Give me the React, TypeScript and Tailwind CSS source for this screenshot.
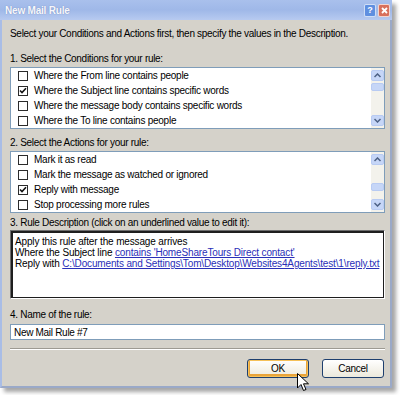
import React from "react";

const font = { fontFamily: '"Liberation Sans", Arial, sans-serif' };

const conditions = [
  { label: "Where the From line contains people", checked: false },
  { label: "Where the Subject line contains specific words", checked: true },
  { label: "Where the message body contains specific words", checked: false },
  { label: "Where the To line contains people", checked: false },
];

const actions = [
  { label: "Mark it as read", checked: false },
  { label: "Mark the message as watched or ignored", checked: false },
  { label: "Reply with message", checked: true },
  { label: "Stop processing more rules", checked: false },
];

function CheckBox({ checked }: { checked: boolean }) {
  return (
    <div className="flex h-[10px] w-[10px] flex-shrink-0 items-center justify-center border border-[#2b2b2b] bg-white">
      {checked && (
        <svg width="8" height="8" viewBox="0 0 8 8">
          <path d="M1 3.5 L3 5.5 L7 1.2" fill="none" stroke="#111" strokeWidth="1.6" />
        </svg>
      )}
    </div>
  );
}

function ScrollBar({ thumbTop }: { thumbTop: number }) {
  return (
    <div className="relative flex w-[13px] flex-shrink-0 flex-col justify-between bg-[#f3f2ec] py-[2px]">
      <div className="flex h-[11px] items-center justify-center rounded-[2px] border border-[#b8cbf3] bg-[#c6d6f7]">
        <svg width="7" height="5" viewBox="0 0 7 5">
          <path d="M0.5 4 L3.5 1 L6.5 4" fill="none" stroke="#4d6185" strokeWidth="1.5" />
        </svg>
      </div>
      <div
        className="absolute left-0 right-0 h-[8px] rounded-[2px] border border-[#b8cbf3] bg-[#c6d6f7]"
        style={{ top: thumbTop }}
      />
      <div className="flex h-[11px] items-center justify-center rounded-[2px] border border-[#b8cbf3] bg-[#c6d6f7]">
        <svg width="7" height="5" viewBox="0 0 7 5">
          <path d="M0.5 1 L3.5 4 L6.5 1" fill="none" stroke="#4d6185" strokeWidth="1.5" />
        </svg>
      </div>
    </div>
  );
}

function CheckList({ items, thumbTop }: { items: { label: string; checked: boolean }[]; thumbTop: number }) {
  return (
    <div className="flex h-[62px] border border-[#7f9db9] bg-white">
      <div className="flex flex-1 flex-col pl-[7px] pt-[1px]">
        {items.map((item) => (
          <div key={item.label} className="flex h-[15px] items-center gap-[6px]">
            <CheckBox checked={item.checked} />
            <span className="text-[10px] leading-none tracking-[-0.25px] text-black">{item.label}</span>
          </div>
        ))}
      </div>
      <ScrollBar thumbTop={thumbTop} />
    </div>
  );
}

function Link({ children }: { children: React.ReactNode }) {
  return <span className="text-[#2a2fb8] underline">{children}</span>;
}

export default function App() {
  return (
    <div className="h-[395px] w-[400px] bg-white" style={font}>
      <div className="flex h-[388px] w-[392px] flex-col shadow-[4px_4px_4px_rgba(0,0,0,0.35)]">
        {/* Title bar */}
        <div className="flex h-[20px] items-center justify-between bg-gradient-to-b from-[#a9c0ec] via-[#9fb8e8] to-[#b7caf0] pl-[5px] pr-[2px]">
          <span className="text-[10px] font-bold tracking-[-0.2px] text-white/95 [text-shadow:0_0_1px_rgba(60,80,140,0.5)]">
            New Mail Rule
          </span>
          <div className="flex gap-[2px]">
            <div className="flex h-[13px] w-[12px] items-center justify-center rounded-[2px] border border-white/70 bg-[#5f8fe0] text-[9px] font-bold leading-none text-white">
              ?
            </div>
            <div className="flex h-[13px] w-[12px] items-center justify-center rounded-[2px] border border-white/70 bg-[#d8705c]">
              <svg width="7" height="7" viewBox="0 0 7 7">
                <path d="M1 1 L6 6 M6 1 L1 6" stroke="white" strokeWidth="1.8" />
              </svg>
            </div>
          </div>
        </div>

        {/* Body */}
        <div className="flex flex-1 flex-col border-b-[2px] border-l-[2px] border-r-[2px] border-b-[#9aa9c8] border-l-[#a9bde6] border-r-[#9aa9c8] bg-[#d5d2ca] pl-[8px] pr-[5px] text-[10px] tracking-[-0.3px] text-black">
          <div className="mt-[8px] leading-[12px]">
            Select your Conditions and Actions first, then specify the values in the Description.
          </div>

          <div className="mt-[13px] leading-[12px]">1. Select the Conditions for your rule:</div>
          <div className="mt-[2px]">
            <CheckList items={conditions} thumbTop={15} />
          </div>

          <div className="mt-[8px] leading-[12px]">2. Select the Actions for your rule:</div>
          <div className="mt-[2px]">
            <CheckList items={actions} thumbTop={31} />
          </div>

          <div className="mt-[4px] leading-[12px]">3. Rule Description (click on an underlined value to edit it):</div>
          <div className="mt-[1px] h-[69px] border border-b-white border-l-[#6e6e6e] border-r-white border-t-[#6e6e6e]">
            <div className="h-full border border-l-2 border-t-2 border-[#1e1e1e] bg-white pl-[2px] pt-[3px] leading-[11px] tracking-[-0.15px]">
              <div>Apply this rule after the message arrives</div>
              <div>
                Where the Subject line <Link>contains 'HomeShareTours Direct contact'</Link>
              </div>
              <div>
                Reply with <Link>C:\Documents and Settings\Tom\Desktop\Websites4Agents\test\1\reply.txt</Link>
              </div>
            </div>
          </div>

          <div className="mt-[10px] leading-[12px]">4. Name of the rule:</div>
          <div className="mt-[3px] flex h-[16px] items-center border border-[#7f9db9] bg-white pl-[3px]">
            New Mail Rule #7
          </div>

          <div className="mt-[8px] border-b border-t border-b-white border-t-[#9d9a92]" />

          <div className="mt-[9px] flex justify-end gap-[13px] pr-[1px]">
            <div className="relative">
              <div className="flex h-[19px] w-[62px] items-center justify-center rounded-[3px] border border-[#1e3f6e] bg-gradient-to-b from-white to-[#ece9dc] shadow-[inset_0_0_0_1px_#f5c15a,inset_0_-1px_0_2px_#e9a43a]">
                OK
              </div>
              <svg className="absolute left-[50px] top-[14px]" width="13" height="20" viewBox="0 0 13 20">
                <path
                  d="M0.5 0.5 L0.5 15 L4 11.5 L6.5 17.5 L9 16.5 L6.5 10.8 L11.5 10.8 Z"
                  fill="white"
                  stroke="black"
                  strokeWidth="1"
                  strokeLinejoin="round"
                />
              </svg>
            </div>
            <div className="flex h-[19px] w-[62px] items-center justify-center rounded-[3px] border border-[#1e3f6e] bg-gradient-to-b from-white to-[#ece9dc]">
              Cancel
            </div>
          </div>
        </div>
      </div>
    </div>
  );
}
